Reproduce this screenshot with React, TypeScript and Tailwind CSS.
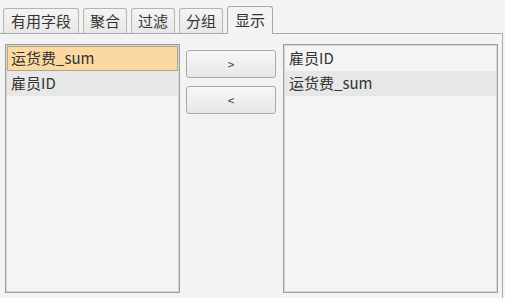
const tabs = ['有用字段', '聚合', '过滤', '分组', '显示'];

const font = { fontFamily: '"Noto Sans CJK SC", "Liberation Sans", sans-serif' };

function ListBox({ items }: { items: { label: string; state?: 'selected' | 'alt' }[] }) {
  return (
    <div className="flex h-[249px] flex-col border border-[#9e9e9e] bg-[#f3f4f3] p-px shadow-[inset_0_0_0_1px_#d6d6d6]">
      {items.map((it) => (
        <div
          key={it.label}
          className={
            it.state === 'selected'
              ? 'flex h-[25px] items-center border border-[#b3a58f] bg-[#fdd9a2] pl-[3px] text-[15px] text-[#333]'
              : it.state === 'alt'
              ? 'flex h-[25px] items-center bg-[#e6e7e6] pl-[4px] text-[15px] text-[#333]'
              : 'flex h-[25px] items-center pl-[4px] text-[15px] text-[#333]'
          }
        >
          {it.label}
        </div>
      ))}
    </div>
  );
}

function MoveButton({ label }: { label: string }) {
  return (
    <button className="flex h-[28px] w-[90px] items-center justify-center rounded-[3px] border border-[#a9a9a9] bg-gradient-to-b from-[#f7f7f7] to-[#e6e7e6] text-[12px] text-[#444]">
      {label}
    </button>
  );
}

export default function App() {
  return (
    <div className="h-[298px] w-[505px] overflow-hidden bg-[#f2f3f2]" style={font}>
      <div className="flex h-[33px] items-end gap-[4px] pl-[3px]">
        {tabs.map((t, i) => {
          const active = t === '显示';
          const pad = i === 0 ? 'px-[7px]' : 'px-[6px]';
          return (
            <div
              key={t}
              className={
                active
                  ? 'relative -mb-px flex h-[28px] items-center rounded-t-[3px] border border-b-0 border-[#a9a9a9] bg-[#f2f3f2] px-[7px] text-[15px] text-[#333]'
                  : `flex h-[25px] items-center rounded-t-[3px] border border-b-0 border-[#b4b4b4] bg-gradient-to-b from-[#f4f4f4] to-[#e6e7e6] ${pad} text-[15px] text-[#333]`
              }
            >
              {t}
            </div>
          );
        })}
      </div>
      <div className="mr-[2px] flex h-[265px] gap-[6px] border-t border-r border-[#a9a9a9] pl-[5px] pt-[10px]">
        <div className="w-[175px]">
          <ListBox items={[{ label: '运货费_sum', state: 'selected' }, { label: '雇员ID', state: 'alt' }]} />
        </div>
        <div className="flex flex-col gap-[8px] pt-[6px]">
          <MoveButton label=">" />
          <MoveButton label="<" />
        </div>
        <div className="ml-[1px] w-[215px]">
          <ListBox items={[{ label: '雇员ID' }, { label: '运货费_sum', state: 'alt' }]} />
        </div>
      </div>
    </div>
  );
}
